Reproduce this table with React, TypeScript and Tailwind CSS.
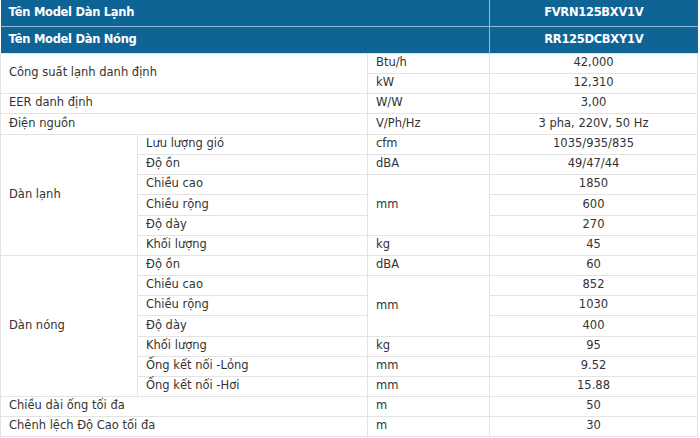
import React from 'react';

const cell = 'border border-[#e3e3e3] px-2 align-middle';
const val = `${cell} text-center`;
const row = 'h-[20px]';
const rowTall = 'h-[21px]';

export default function App() {
  return (
    <div className="w-[700px] h-[438px] bg-white font-['DejaVu_Sans',sans-serif] text-[11.5px] text-[#333]">
      <table className="w-[698px] border-collapse table-fixed">
        <colgroup>
          <col className="w-[137px]" />
          <col className="w-[230px]" />
          <col className="w-[122px]" />
          <col />
        </colgroup>
        <thead>
          <tr className="h-[26.5px] bg-[#0f6496] text-white font-bold tracking-[-0.3px]">
            <td colSpan={3} className="border border-[#8fbcd9] border-t-0 border-l-0 px-2">Tên Model Dàn Lạnh</td>
            <td className="border border-[#8fbcd9] border-t-0 border-r-0 text-center">FVRN125BXV1V</td>
          </tr>
          <tr className="h-[26.5px] bg-[#0f6496] text-white font-bold tracking-[-0.3px]">
            <td colSpan={3} className="border border-[#8fbcd9] border-b-0 border-l-0 px-2">Tên Model Dàn Nóng</td>
            <td className="border border-[#8fbcd9] border-b-0 border-r-0 text-center">RR125DCBXY1V</td>
          </tr>
        </thead>
        <tbody>
          <tr className={row}>
            <td colSpan={2} rowSpan={2} className={cell}>Công suất lạnh danh định</td>
            <td className={cell}>Btu/h</td>
            <td className={val}>42,000</td>
          </tr>
          <tr className={row}>
            <td className={cell}>kW</td>
            <td className={val}>12,310</td>
          </tr>
          <tr className={row}>
            <td colSpan={2} className={cell}>EER danh định</td>
            <td className={cell}>W/W</td>
            <td className={val}>3,00</td>
          </tr>
          <tr className={rowTall}>
            <td colSpan={2} className={cell}>Điện nguồn</td>
            <td className={cell}>V/Ph/Hz</td>
            <td className={val}>3 pha, 220V, 50 Hz</td>
          </tr>

          <tr className={row}>
            <td rowSpan={6} className={cell}>Dàn lạnh</td>
            <td className={cell}>Lưu lượng gió</td>
            <td className={cell}>cfm</td>
            <td className={val}>1035/935/835</td>
          </tr>
          <tr className={row}>
            <td className={cell}>Độ ồn</td>
            <td className={cell}>dBA</td>
            <td className={val}>49/47/44</td>
          </tr>
          <tr className={row}>
            <td className={cell}>Chiều cao</td>
            <td rowSpan={3} className={cell}>mm</td>
            <td className={val}>1850</td>
          </tr>
          <tr className={rowTall}>
            <td className={cell}>Chiều rộng</td>
            <td className={val}>600</td>
          </tr>
          <tr className={row}>
            <td className={cell}>Độ dày</td>
            <td className={val}>270</td>
          </tr>
          <tr className={row}>
            <td className={cell}>Khối lượng</td>
            <td className={cell}>kg</td>
            <td className={val}>45</td>
          </tr>

          <tr className={row}>
            <td rowSpan={7} className={cell}>Dàn nóng</td>
            <td className={cell}>Độ ồn</td>
            <td className={cell}>dBA</td>
            <td className={val}>60</td>
          </tr>
          <tr className={row}>
            <td className={cell}>Chiều cao</td>
            <td rowSpan={3} className={cell}>mm</td>
            <td className={val}>852</td>
          </tr>
          <tr className={row}>
            <td className={cell}>Chiều rộng</td>
            <td className={val}>1030</td>
          </tr>
          <tr className={rowTall}>
            <td className={cell}>Độ dày</td>
            <td className={val}>400</td>
          </tr>
          <tr className={row}>
            <td className={cell}>Khối lượng</td>
            <td className={cell}>kg</td>
            <td className={val}>95</td>
          </tr>
          <tr className={row}>
            <td className={cell}>Ống kết nối -Lỏng</td>
            <td className={cell}>mm</td>
            <td className={val}>9.52</td>
          </tr>
          <tr className={row}>
            <td className={cell}>Ống kết nối -Hơi</td>
            <td className={cell}>mm</td>
            <td className={val}>15.88</td>
          </tr>

          <tr className={row}>
            <td colSpan={2} className={cell}>Chiều dài ống tối đa</td>
            <td className={cell}>m</td>
            <td className={val}>50</td>
          </tr>
          <tr className={row}>
            <td colSpan={2} className={cell}>Chênh lệch Độ Cao tối đa</td>
            <td className={cell}>m</td>
            <td className={val}>30</td>
          </tr>
        </tbody>
      </table>
    </div>
  );
}
